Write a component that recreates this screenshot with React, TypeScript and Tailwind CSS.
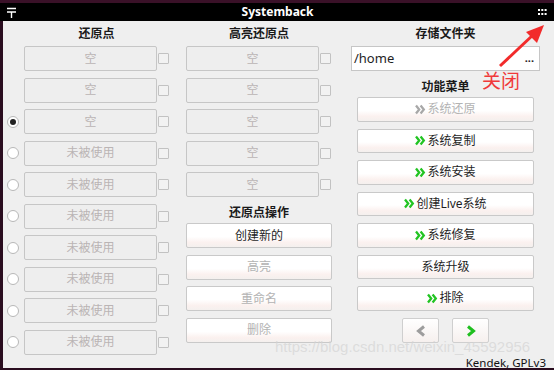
import React from "react";

const FONT = "font-['Noto_Sans','Noto_Sans_CJK_SC',sans-serif]";

function Radio({ on }: { on?: boolean }) {
  return (
    <div className="w-[12px] h-[12px] rounded-full border border-[#b8b8b8] bg-white flex items-center justify-center shrink-0">
      {on && <div className="w-[6px] h-[6px] rounded-full bg-[#222]" />}
    </div>
  );
}

function Check() {
  return <div className="w-[11px] h-[11px] border border-[#c2c2c2] bg-[#f2f2f2] rounded-[1px] shrink-0" />;
}

function Slot({ label }: { label: string }) {
  return (
    <div className="w-[133px] h-[25px] border border-[#c6c6c6] rounded-[2px] bg-[#eeeeee] flex items-center justify-center text-[12px] text-[#bab4b4]">
      {label}
    </div>
  );
}

function Chevrons({ grey }: { grey?: boolean }) {
  const c = grey ? "#a8a8a8" : "#22c422";
  return (
    <svg width="11" height="11" viewBox="0 0 11 11" className="mr-[1px]">
      <path d="M1 1.5 L4.2 5.5 L1 9.5" fill="none" stroke={c} strokeWidth="2.3" />
      <path d="M5.6 1.5 L8.8 5.5 L5.6 9.5" fill="none" stroke={c} strokeWidth="2.3" />
    </svg>
  );
}

function Btn({ label, off, arrow, h = "h-[25px]" }: { label: string; off?: boolean; arrow?: boolean; h?: string }) {
  return (
    <div
      className={`${h} border border-[#c9c9c9] rounded-[2px] bg-[linear-gradient(to_bottom,#ffffff_0%,#ffffff_55%,#fbf1ef_80%,#f4f0ee_100%)] flex items-center justify-center text-[12px] ${
        off ? "text-[#b3b3b3]" : "text-[#1e1e1e]"
      }`}
    >
      {arrow && <Chevrons grey={off} />}
      <span>{label}</span>
    </div>
  );
}

export default function App() {
  const left = ["空", "空", "空", "未被使用", "未被使用", "未被使用", "未被使用", "未被使用", "未被使用", "未被使用"];

  return (
    <div className={`w-[554px] h-[370px] bg-[#2a0d1f] relative overflow-hidden ${FONT}`}>
      <div className="h-[3px] bg-[#3a1128]" />
      <div className="h-[18px] bg-black flex items-center justify-between px-[6px] text-white">
        <svg width="11" height="11" viewBox="0 0 11 11">
          <path d="M1 1.5 H10 M1 5 H10 M5.5 5 V11" stroke="#fff" strokeWidth="1.4" fill="none" />
        </svg>
        <div className="text-[12px] font-bold leading-none">Systemback</div>
        <svg width="9" height="7" viewBox="0 0 9 7" className="mr-[1px]">
          {[0, 3.3, 6.6].map((x) =>
            [0, 4].map((y) => <rect key={`${x}-${y}`} x={x} y={y} width="2" height="2" fill="#fff" />)
          )}
        </svg>
      </div>

      <div className="h-[347px] ml-[3px] bg-[#efefef] flex pl-[4px]">
        {/* restore points */}
        <div className="w-[162px] flex flex-col">
          <div className="h-[25px] pl-[17px] flex items-center justify-center text-[12px] font-bold text-[#1a1a1a]">还原点</div>
          <div className="flex flex-col gap-[6.5px]">
            {left.map((l, i) => (
              <div key={i} className="flex items-center h-[25px]">
                <div className="w-[12px] mr-[5px] flex">{i === 2 ? <Radio on /> : i > 2 ? <Radio /> : null}</div>
                <Slot label={l} />
                <div className="ml-[1px]">
                  <Check />
                </div>
              </div>
            ))}
          </div>
        </div>

        {/* highlighted */}
        <div className="w-[146px] ml-[17px] flex flex-col">
          <div className="h-[25px] flex items-center justify-center text-[12px] font-bold text-[#1a1a1a]">高亮还原点</div>
          <div className="flex flex-col gap-[6.5px]">
            {[0, 1, 2, 3, 4].map((i) => (
              <div key={i} className="flex items-center h-[25px]">
                <Slot label="空" />
                <div className="ml-[1px]">
                  <Check />
                </div>
              </div>
            ))}
          </div>
          <div className="h-[26px] pt-[9px] leading-[14px] text-center text-[12px] font-bold text-[#1a1a1a]">还原点操作</div>
          <div className="flex flex-col gap-[6.5px]">
            <Btn label="创建新的" />
            <Btn label="高亮" off />
            <Btn label="重命名" off />
            <Btn label="删除" off />
          </div>
        </div>

        {/* storage + menu */}
        <div className="w-[189px] ml-[19px] flex flex-col">
          <div className="h-[25px] flex items-center justify-center text-[12px] font-bold text-[#1a1a1a]">存储文件夹</div>
          <div className="h-[25px] border border-[#c6c6c6] bg-white flex items-center justify-between pl-[2px] pr-[5px] text-[13px] text-[#1e1e1e]">
            <span>/home</span>
            <span className="text-[11px] font-bold leading-none pb-[3px]">...</span>
          </div>
          <div className="h-[26px] pt-[9px] leading-[14px] text-center text-[12px] font-bold text-[#1a1a1a]">功能菜单</div>
          <div className="px-[6px] flex flex-col gap-[7px]">
            <Btn label="系统还原" off arrow h="h-[24.5px]" />
            <Btn label="系统复制" arrow h="h-[24.5px]" />
            <Btn label="系统安装" arrow h="h-[24.5px]" />
            <Btn label="创建Live系统" arrow h="h-[24.5px]" />
            <Btn label="系统修复" arrow h="h-[24.5px]" />
            <Btn label="系统升级" h="h-[24.5px]" />
            <Btn label="排除" arrow h="h-[24.5px]" />
          </div>
          <div className="mt-[7.5px] flex justify-center gap-[13px]">
            <div className="w-[37px] h-[25px] border border-[#cfcfcf] rounded-[2px] bg-[linear-gradient(to_bottom,#ffffff,#f6f0ee)] flex items-center justify-center">
              <svg width="12" height="12" viewBox="0 0 12 12">
                <path d="M9 1.5 L3.5 6 L9 10.5" fill="none" stroke="#9d9d9d" strokeWidth="3" />
              </svg>
            </div>
            <div className="w-[37px] h-[25px] border border-[#cfcfcf] rounded-[2px] bg-[linear-gradient(to_bottom,#ffffff,#f6f0ee)] flex items-center justify-center">
              <svg width="12" height="12" viewBox="0 0 12 12">
                <path d="M3 1.5 L8.5 6 L3 10.5" fill="none" stroke="#1fbf1f" strokeWidth="3" />
              </svg>
            </div>
          </div>
        </div>
      </div>
      <div className="h-[2px] bg-[#2a0d1f]" />

      {/* watermark */}
      <div className="absolute left-[275px] top-[340px] text-[15px] leading-[14px] font-['Liberation_Sans',sans-serif] text-[#d4d4d4]/70 whitespace-nowrap">
        https://blog.csdn.net/weixin_45592956
      </div>
      <div className="absolute right-[8px] top-[357px] text-[11.5px] text-[#111] leading-none">Kendek, GPLv3</div>

      {/* annotation */}
      <svg className="absolute left-[490px] top-[22px]" width="60" height="50" viewBox="0 0 60 50">
        <path d="M10 44 L44 12" stroke="#f22b2b" strokeWidth="3" />
        <path d="M54 3 L36 10 L47 21 Z" fill="#f22b2b" />
      </svg>
      <div className="absolute left-[482px] top-[72px] text-[19px] leading-none text-[#f03a3a]">关闭</div>
    </div>
  );
}
